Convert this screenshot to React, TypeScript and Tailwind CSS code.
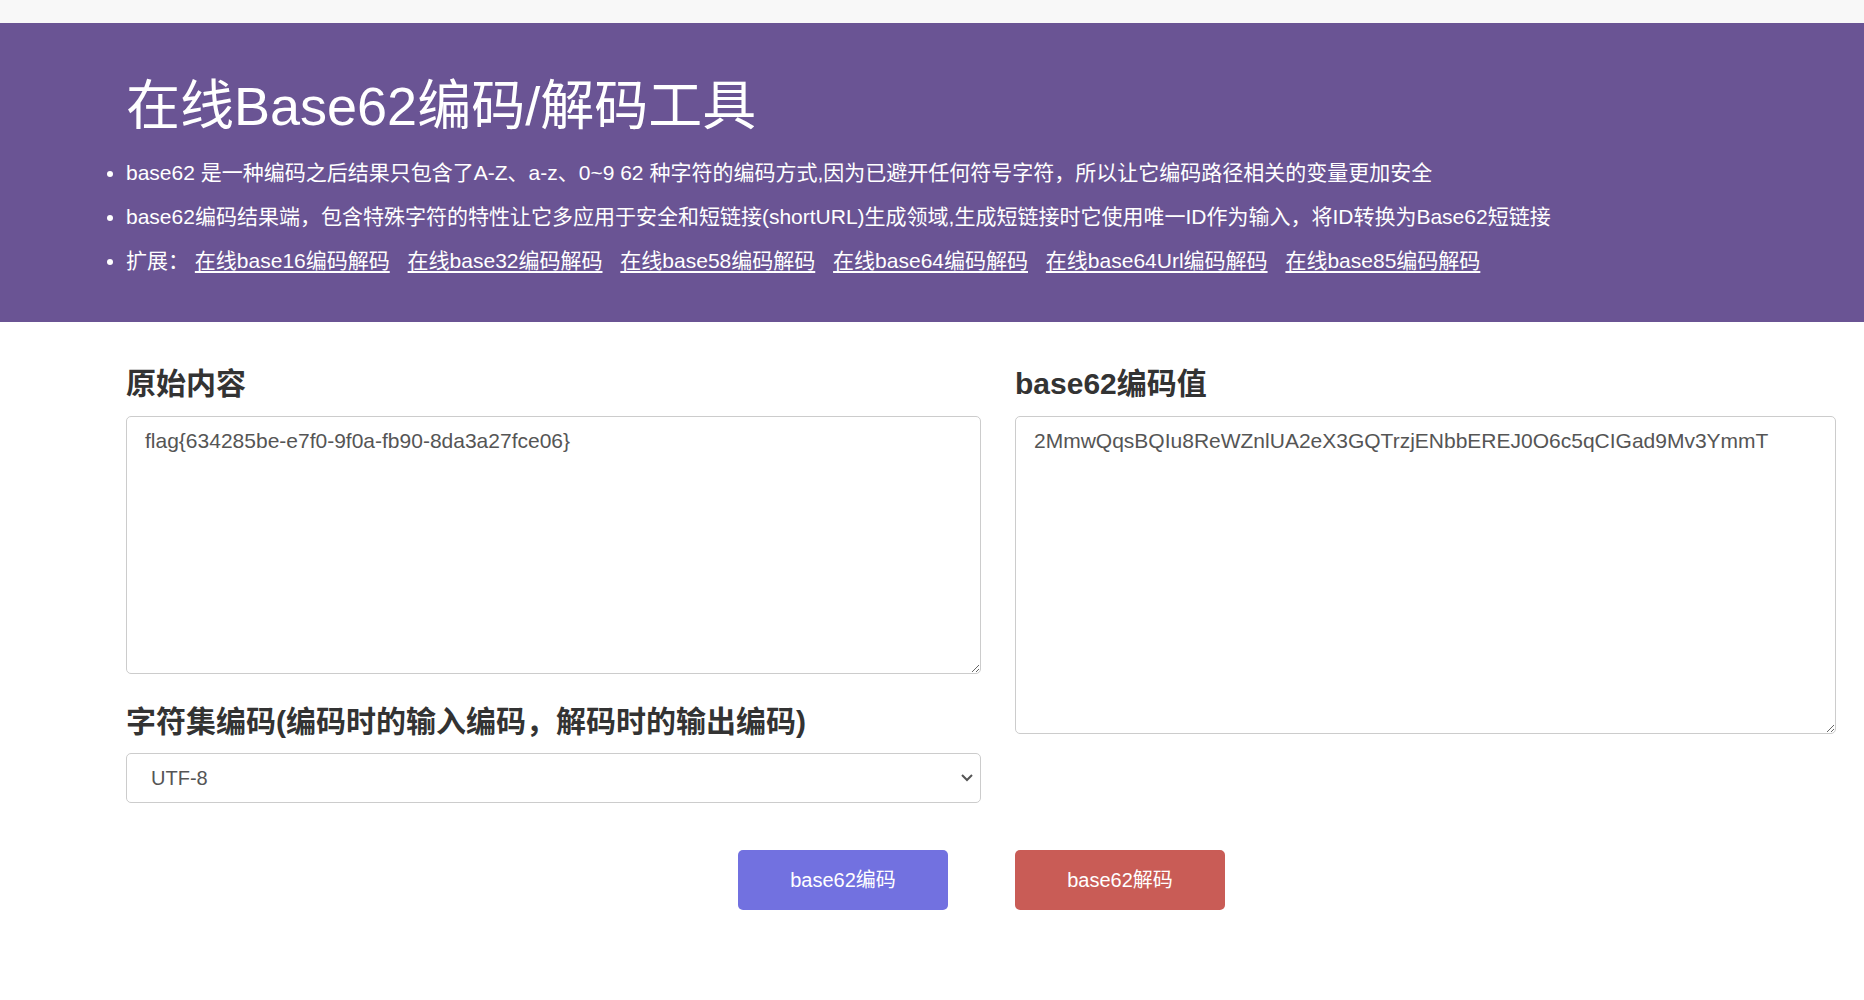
import React from "react";

const links = [
  "在线base16编码解码",
  "在线base32编码解码",
  "在线base58编码解码",
  "在线base64编码解码",
  "在线base64Url编码解码",
  "在线base85编码解码",
];

export default function App() {
  return (
    <div className="min-h-screen bg-white font-['Liberation_Sans','Noto_Sans_CJK_SC',sans-serif]">
      <div className="h-[23px] bg-[#f8f8f8]" />
      <header className="bg-[#6a5494] text-white pt-[53px] pb-[39px] pl-[126px]">
        <h1 className="text-[54px] leading-[60px] font-normal">在线Base62编码/解码工具</h1>
        <ul className="mt-[15px] list-disc text-[21px] leading-[44px]">
          <li>base62 是一种编码之后结果只包含了A-Z、a-z、0~9 62 种字符的编码方式,因为已避开任何符号字符，所以让它编码路径相关的变量更加安全</li>
          <li>base62编码结果端，包含特殊字符的特性让它多应用于安全和短链接(shortURL)生成领域,生成短链接时它使用唯一ID作为输入，将ID转换为Base62短链接</li>
          <li>
            扩展：
            {links.map((l) => (
              <React.Fragment key={l}>
                {" "}
                <a href="#" className="underline underline-offset-[3px] mr-[12px] text-white">
                  {l}
                </a>
              </React.Fragment>
            ))}
          </li>
        </ul>
      </header>
      <main className="pl-[126px] pt-[44px] pb-[60px]">
        <div className="grid grid-cols-[855px_821px] gap-x-[34px]">
          <div className="flex flex-col">
            <h2 className="text-[30px] leading-[36px] font-bold text-[#333]">原始内容</h2>
            <textarea
              className="mt-[14px] w-full h-[258px] border border-[#ccc] rounded-[5px] px-[18px] pt-[8px] pb-[10px] text-[21px] leading-[1.5] text-[#555] bg-white outline-none"
              defaultValue="flag{634285be-e7f0-9f0a-fb90-8da3a27fce06}"
            />
            <h2 className="mt-[30px] text-[30px] leading-[36px] font-bold text-[#333]">
              字符集编码(编码时的输入编码，解码时的输出编码)
            </h2>
            <div className="relative mt-[13px]">
              <select
                className="w-full h-[50px] appearance-none border border-[#ccc] rounded-[5px] pl-[24px] pr-[40px] text-[20px] text-[#555] bg-white outline-none"
                defaultValue="UTF-8"
              >
                <option value="UTF-8">UTF-8</option>
                <option value="GBK">GBK</option>
                <option value="GB2312">GB2312</option>
              </select>
              <svg
                className="absolute right-[7px] top-[20px] pointer-events-none"
                width="14"
                height="10"
                viewBox="0 0 14 10"
                fill="none"
              >
                <path d="M2 2l5 5 5-5" stroke="#555" strokeWidth="2" />
              </svg>
            </div>
          </div>
          <div className="flex flex-col">
            <h2 className="text-[30px] leading-[36px] font-bold text-[#333]">base62编码值</h2>
            <textarea
              className="mt-[14px] w-full h-[318px] border border-[#ccc] rounded-[5px] px-[18px] pt-[8px] pb-[10px] text-[21px] leading-[1.5] text-[#555] bg-white outline-none"
              defaultValue="2MmwQqsBQIu8ReWZnlUA2eX3GQTrzjENbbEREJ0O6c5qCIGad9Mv3YmmT"
            />
          </div>
          <div className="flex justify-end pr-[33px] mt-[47px]">
            <button className="w-[210px] h-[60px] rounded-[5px] bg-[#7271e0] text-white text-[20px]">
              base62编码
            </button>
          </div>
          <div className="flex justify-start mt-[47px]">
            <button className="w-[210px] h-[60px] rounded-[5px] bg-[#c95c56] text-white text-[20px]">
              base62解码
            </button>
          </div>
        </div>
      </main>
    </div>
  );
}
